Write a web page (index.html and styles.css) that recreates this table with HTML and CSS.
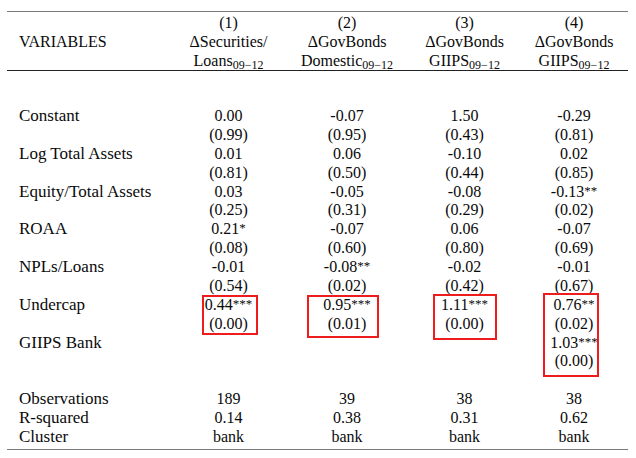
FILE: index.html
```html
<!DOCTYPE html>
<html>
<head>
<meta charset="utf-8">
<link rel="stylesheet" href="styles.css">
</head>
<body>
<div class="table">
  <div class="head grid">
    <div class="label varhead">VARIABLES</div>
    <div class="col"><div>(1)</div><div>ΔSecurities/</div><div>Loans<sub>09−12</sub></div></div>
    <div class="col"><div>(2)</div><div>ΔGovBonds</div><div>Domestic<sub>09−12</sub></div></div>
    <div class="col"><div>(3)</div><div>ΔGovBonds</div><div>GIIPS<sub>09−12</sub></div></div>
    <div class="col"><div>(4)</div><div>ΔGovBonds</div><div>GIIPS<sub>09−12</sub></div></div>
  </div>
  <div class="body grid">
    <div class="label">Constant</div>
    <div class="col"><div>0.00</div><div>(0.99)</div></div>
    <div class="col"><div>-0.07</div><div>(0.95)</div></div>
    <div class="col"><div>1.50</div><div>(0.43)</div></div>
    <div class="col"><div>-0.29</div><div>(0.81)</div></div>

    <div class="label">Log Total Assets</div>
    <div class="col"><div>0.01</div><div>(0.81)</div></div>
    <div class="col"><div>0.06</div><div>(0.50)</div></div>
    <div class="col"><div>-0.10</div><div>(0.44)</div></div>
    <div class="col"><div>0.02</div><div>(0.85)</div></div>

    <div class="label">Equity/Total Assets</div>
    <div class="col"><div>0.03</div><div>(0.25)</div></div>
    <div class="col"><div>-0.05</div><div>(0.31)</div></div>
    <div class="col"><div>-0.08</div><div>(0.29)</div></div>
    <div class="col"><div>-0.13<sup>**</sup></div><div>(0.02)</div></div>

    <div class="label">ROAA</div>
    <div class="col"><div>0.21<sup>*</sup></div><div>(0.08)</div></div>
    <div class="col"><div>-0.07</div><div>(0.60)</div></div>
    <div class="col"><div>0.06</div><div>(0.80)</div></div>
    <div class="col"><div>-0.07</div><div>(0.69)</div></div>

    <div class="label">NPLs/Loans</div>
    <div class="col"><div>-0.01</div><div>(0.54)</div></div>
    <div class="col"><div>-0.08<sup>**</sup></div><div>(0.02)</div></div>
    <div class="col"><div>-0.02</div><div>(0.42)</div></div>
    <div class="col"><div>-0.01</div><div>(0.67)</div></div>

    <div class="label">Undercap</div>
    <div class="col marked"><div>0.44<sup>***</sup></div><div>(0.00)</div><span class="box box1"></span></div>
    <div class="col marked"><div>0.95<sup>***</sup></div><div>(0.01)</div><span class="box box2"></span></div>
    <div class="col marked"><div>1.11<sup>***</sup></div><div>(0.00)</div><span class="box box3"></span></div>
    <div class="col marked span2"><div>0.76<sup>**</sup></div><div>(0.02)</div><div>1.03<sup>***</sup></div><div>(0.00)</div><span class="box box4"></span></div>

    <div class="label">GIIPS Bank</div>
    <div class="col empty"></div>
    <div class="col empty"></div>
    <div class="col empty"></div>

    <div class="spacer"></div>

    <div class="label">Observations</div>
    <div class="col"><div>189</div></div>
    <div class="col"><div>39</div></div>
    <div class="col"><div>38</div></div>
    <div class="col"><div>38</div></div>

    <div class="label">R-squared</div>
    <div class="col"><div>0.14</div></div>
    <div class="col"><div>0.38</div></div>
    <div class="col"><div>0.31</div></div>
    <div class="col"><div>0.62</div></div>

    <div class="label">Cluster</div>
    <div class="col"><div>bank</div></div>
    <div class="col"><div>bank</div></div>
    <div class="col"><div>bank</div></div>
    <div class="col"><div>bank</div></div>
  </div>
</div>
</body>
</html>
```
FILE: styles.css
```css
html, body {
  margin: 0;
  padding: 0;
  background: #ffffff;
}
body {
  font-family: "Liberation Serif", "Times New Roman", serif;
  font-size: 16px;
  color: #0a0a0a;
}
.table {
  margin: 11px 0 0 7px;
  width: 621px;
  border-top: 1px solid #7a7a7a;
  border-bottom: 1px solid #7a7a7a;
}
.grid {
  display: grid;
  grid-template-columns: 165px 113px 124px 111px 108px;
  line-height: 18.88px;
}
.head {
  line-height: 19px;
  padding-top: 0.5px;
  border-bottom: 1px solid #222;
}
.varhead {
  align-self: center;
}
.label {
  padding-left: 12px;
  white-space: nowrap;
}
.body .label {
  font-size: 17px;
}
.col {
  text-align: center;
  white-space: nowrap;
}
.col div {
  height: 18.88px;
}
.head .col div {
  height: 19px;
}
.empty {
  height: 37.76px;
}
.body {
  padding-top: 36.5px;
  padding-bottom: 2.5px;
}
sub {
  font-size: 12px;
  vertical-align: -3px;
  line-height: 0;
}
sup {
  font-size: 13px;
  vertical-align: 2px;
  line-height: 0;
}
.marked {
  position: relative;
}
.span2 {
  grid-row: span 2;
}
.spacer {
  grid-column: 1 / -1;
  height: 18.88px;
}
.box {
  position: absolute;
  box-sizing: border-box;
  border: 2px solid #ee1c1c;
}
.box1 { left: 30px; width: 56px; top: -0.5px; height: 40px; }
.box2 { left: 22px; width: 72px; top: -1px; height: 43px; }
.box3 { left: 24px; width: 64px; top: -2px; height: 46px; }
.box4 { left: 23px; width: 56px; top: -3px; height: 84px; }
```
